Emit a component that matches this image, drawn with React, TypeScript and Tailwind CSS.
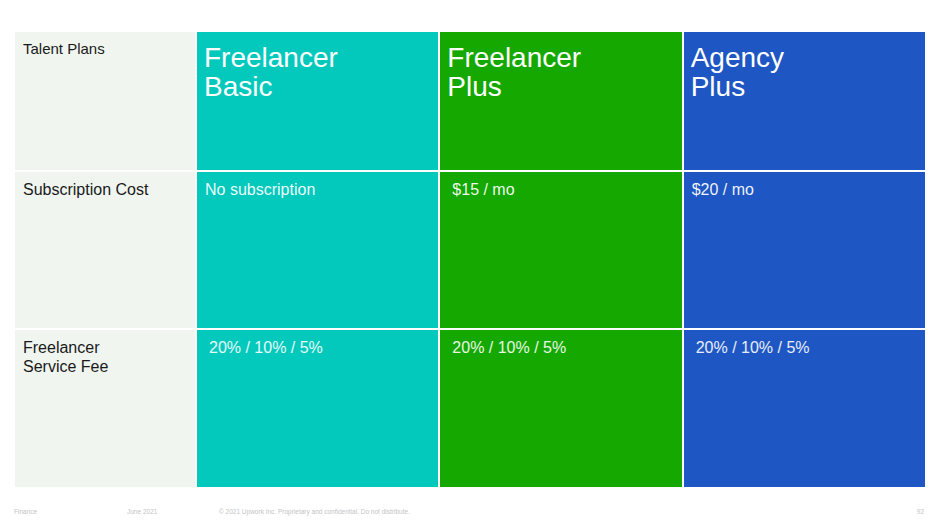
const plans = [
  { name: ['Freelancer', 'Basic'], cost: 'No subscription', fee: '20% / 10% / 5%', bg: 'bg-[#02c9bc]', costPad: 'pl-2', feePad: 'pl-3' },
  { name: ['Freelancer', 'Plus'], cost: '$15 / mo', fee: '20% / 10% / 5%', bg: 'bg-[#14a800]', costPad: 'pl-3', feePad: 'pl-3' },
  { name: ['Agency', 'Plus'], cost: '$20 / mo', fee: '20% / 10% / 5%', bg: 'bg-[#1e56c3]', costPad: 'pl-2', feePad: 'pl-3' },
];

export default function App() {
  return (
    <div className="w-[940px] h-[528px] bg-white flex flex-col" style={{ fontFamily: '"Liberation Sans", Arial, sans-serif' }}>
      <div className="mt-[32px] mx-[15px] grid grid-cols-[180px_1fr_1fr_1fr] grid-rows-[138px_156px_157px] gap-[2px]">
        <div className="bg-[#f0f5f0] px-2 pt-[7px] text-[15px] leading-5 text-[#1a1a1a]">Talent Plans</div>
        {plans.map((p) => (
          <div key={p.name.join(' ')} className={`${p.bg} pl-[7px] pt-[11px] text-[28px] leading-[29px] text-white`}>
            {p.name[0]}
            <br />
            {p.name[1]}
          </div>
        ))}

        <div className="bg-[#f0f5f0] px-2 pt-2 text-[16px] leading-5 text-[#1a1a1a]">Subscription Cost</div>
        {plans.map((p) => (
          <div key={p.cost} className={`${p.bg} ${p.costPad} pt-2 text-[16px] leading-5 text-white/95`}>{p.cost}</div>
        ))}

        <div className="bg-[#f0f5f0] px-2 pt-2 text-[16px] leading-[19px] text-[#1a1a1a]">
          Freelancer
          <br />
          Service Fee
        </div>
        {plans.map((p, i) => (
          <div key={i} className={`${p.bg} ${p.feePad} pt-2 text-[16px] leading-5 text-white/90`}>{p.fee}</div>
        ))}
      </div>

      <div className="mt-[20px] mx-[14px] flex items-center text-[6.5px] text-[#c4c4c4]">
        <span className="w-[113px]">Finance</span>
        <span className="w-[92px]">June 2021</span>
        <span>© 2021 Upwork Inc. Proprietary and confidential. Do not distribute.</span>
        <span className="ml-auto mr-[2px]">92</span>
      </div>
    </div>
  );
}
